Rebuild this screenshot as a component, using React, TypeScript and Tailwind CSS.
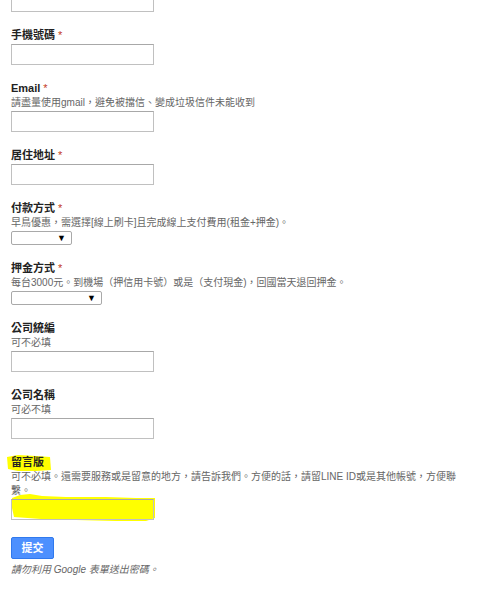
import React from 'react'

const font = { fontFamily: '"Liberation Sans", "Noto Sans CJK TC", sans-serif' }

const Label = ({ text, required }: { text: string; required?: boolean }) => (
  <div className="h-[16px] text-[11px] leading-[16px] font-bold text-[#222]">
    {text}
    {required && <span className="ml-[3px] font-normal text-[#c43b1d]">*</span>}
  </div>
)

const Help = ({ children }: { children: React.ReactNode }) => (
  <div className="text-[10px] leading-[14px] text-[#666]">{children}</div>
)

const TextBox = () => (
  <div className="mt-px h-[21px] w-[143px] border border-[#c0c0c0] border-t-[#a8a8a8] bg-white" />
)

const Dropdown = ({ width }: { width: string }) => (
  <div
    className={`mt-px flex h-[14px] ${width} items-center justify-end rounded-[2px] border border-[#a9a9a9] bg-white pr-[5px] text-[9px] leading-none text-black`}
  >
    ▼
  </div>
)

export default function App() {
  return (
    <div className="min-h-[600px] bg-white pl-[11px] pr-[20px]" style={font}>
      <div className="-mt-[9px] h-[21px] w-[143px] border border-[#c0c0c0] bg-white" />

      <div className="mt-[15px] flex flex-col gap-[15px]">
        <div>
          <Label text="手機號碼" required />
          <TextBox />
        </div>

        <div>
          <Label text="Email" required />
          <Help>請盡量使用gmail，避免被擋信、變成垃圾信件未能收到</Help>
          <TextBox />
        </div>

        <div>
          <Label text="居住地址" required />
          <TextBox />
        </div>

        <div>
          <Label text="付款方式" required />
          <Help>早鳥優惠，需選擇[線上刷卡]且完成線上支付費用(租金+押金)。</Help>
          <Dropdown width="w-[61px]" />
        </div>

        <div>
          <Label text="押金方式" required />
          <Help>每台3000元。到機場（押信用卡號）或是（支付現金)，回國當天退回押金。</Help>
          <Dropdown width="w-[91px]" />
        </div>

        <div>
          <Label text="公司統編" />
          <Help>可不必填</Help>
          <TextBox />
        </div>

        <div>
          <Label text="公司名稱" />
          <Help>可必不填</Help>
          <TextBox />
        </div>

        <div className="relative">
          {/* highlighter marks */}
          <svg
            className="absolute -left-[5px] -top-[4px] h-[80px] w-[160px]"
            viewBox="0 0 160 80"
          >
            <path d="M1 7 L12 5 L30 6 L44 7 L45 20 L30 21 L12 21 L2 19 Z" fill="#ffff00" />
            <path
              d="M6 48 L14 45 L24 44 L36 46 L60 47 L100 47 L130 48 L149 48 L149 58 L149 68 L140 71 L110 71 L70 70 L35 69 L8 67 L6 58 Z"
              fill="#ffff00"
            />
          </svg>
          <div className="relative">
            <Label text="留言版" />
            <div className="w-[446px]">
              <Help>
                可不必填。還需要服務或是留意的地方，請告訴我們。方便的話，請留LINE ID或是其他帳號，方便聯繫。
              </Help>
            </div>
            <div className="mt-px h-[21px] w-[143px] border border-[#c0c0c0] border-t-[#a8a8a8]" />
          </div>
        </div>

        <div>
          <button className="h-[22px] w-[43px] rounded-[2px] border border-[#3079ed] bg-[#4d90fe] text-[11px] font-bold text-white">
            提交
          </button>
          <div className="mt-[4px] text-[10px] leading-[14px] italic text-[#666]">
            請勿利用 Google 表單送出密碼。
          </div>
        </div>
      </div>
    </div>
  )
}
